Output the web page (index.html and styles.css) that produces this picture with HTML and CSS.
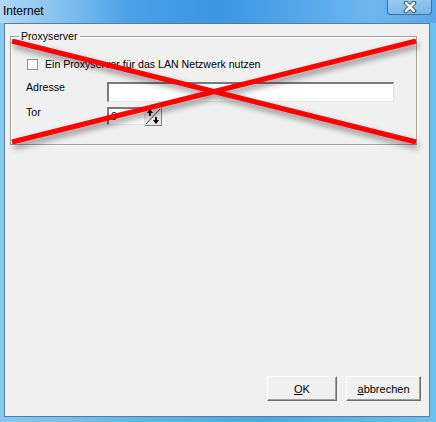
FILE: index.html
```html
<!DOCTYPE html>
<html lang="de">

<head>
    <meta charset="UTF-8">
    <title>Internet</title>
    <link rel="stylesheet" href="styles.css">
</head>

<body>
    <div class="window">
        <div class="titlebar">
            <span class="title">Internet</span>
            <div class="close-btn">
                <svg width="16" height="12" viewBox="0 0 16 12">
                    <path d="M4 2 L12 10 M12 2 L4 10" stroke="#3a4e66" stroke-width="4.5" stroke-linecap="round" />
                    <path d="M4 2 L12 10 M12 2 L4 10" stroke="#ffffff" stroke-width="2.5" stroke-linecap="round" />
                </svg>
            </div>
        </div>

        <div class="client">
            <fieldset class="group">
                <legend>Proxyserver</legend>

                <label class="check-row">
                    <span class="checkbox"></span>
                    Ein Proxyserver für das LAN Netzwerk nutzen
                </label>

                <div class="form-row">
                    <span class="label">Adresse</span>
                    <div class="field field-wide"></div>
                </div>

                <div class="form-row form-row-small">
                    <span class="label">Tor</span>
                    <div class="spinner">
                        <div class="field field-short">0</div>
                        <div class="spin-btn">
                            <svg width="16" height="17" viewBox="0 0 16 17">
                                <path d="M1 16 L15 1" stroke="#404040" stroke-width="1" />
                                <path d="M5 1 L2 5 L8 5 Z" fill="#000" />
                                <rect x="4" y="5" width="2" height="3" fill="#000" />
                                <path d="M11 16 L8 12 L14 12 Z" fill="#000" />
                                <rect x="10" y="9" width="2" height="3" fill="#000" />
                            </svg>
                        </div>
                    </div>
                </div>
            </fieldset>

            <div class="buttons">
                <button class="btn"><u>O</u>K</button>
                <button class="btn btn-cancel"><u>a</u>bbrechen</button>
            </div>

            <svg class="cross" width="420" height="110" viewBox="0 0 420 110">
                <line x1="2" y1="2" x2="406" y2="103" stroke="#ff0000" stroke-width="5" />
                <line x1="2" y1="103" x2="406" y2="2" stroke="#ff0000" stroke-width="5" />
            </svg>
        </div>
    </div>
</body>

</html>
```

FILE: styles.css
```css
body {
    margin: 0;
    font-family: "Liberation Sans", Arial, sans-serif;
    font-size: 10.6px;
    color: #000;
}

.window {
    width: 436px;
    height: 422px;
    box-sizing: border-box;
    display: flex;
    flex-direction: column;
    padding: 0 6px 5px 4px;
    background: linear-gradient(90deg, #86cbf0 0%, #5fb8ec 30%, #4aa8e6 60%, #6ac2f0 100%);
}

.titlebar {
    height: 23px;
    display: flex;
    align-items: flex-start;
    justify-content: space-between;
    margin: 0 -6px 0 -4px;
    padding: 0 4px 0 3px;
    background: linear-gradient(90deg, #b2d8f4 0%, #8cc4ef 12%, #4aa0e6 30%, #3a96e2 50%, #56a9ea 70%, #6fb6ee 85%, #5aa6e6 100%);
}

.title {
    font-size: 12px;
    margin-top: 4px;
    color: #000;
}

.close-btn {
    width: 43px;
    height: 15px;
    margin-top: -1px;
    border: 1px solid #4a6f96;
    border-top: none;
    border-radius: 0 0 4px 4px;
    background: linear-gradient(180deg, rgba(255, 255, 255, 0.35), rgba(255, 255, 255, 0.15));
    display: flex;
    align-items: center;
    justify-content: center;
}

.client {
    flex: 1;
    position: relative;
    background: #f0f0f0;
    border: 1px solid #5a7b9c;
    display: flex;
    flex-direction: column;
}

.group {
    margin: 6px 12px 0 5px;
    padding: 16px 0 18px 15px;
    border: 1px solid #a0a0a0;
    box-shadow: inset 1px 1px 0 #fff, 1px 1px 0 #fff;
}

.group legend {
    padding: 0 2px;
    margin-left: -7px;
    color: #000;
}

.check-row {
    display: flex;
    align-items: center;
    gap: 7px;
    margin: 0 0 12px 1px;
}

.checkbox {
    width: 9px;
    height: 9px;
    background: #fff;
    border: 1px solid #8e8f8f;
}

.form-row {
    display: grid;
    grid-template-columns: 81px 1fr;
    align-items: start;
    margin-bottom: 5px;
}

.form-row-small {
    margin-bottom: 0;
}

.form-row .label {
    margin-top: -1px;
}

.field {
    height: 20px;
    box-sizing: border-box;
    background: #fff;
    border-top: 2px solid #7a7a7a;
    border-left: 2px solid #7a7a7a;
    border-right: 1px solid #e3e3e3;
    border-bottom: 1px solid #e3e3e3;
}

.field-wide {
    width: 287px;
}

.spinner {
    display: flex;
    align-items: flex-start;
}

.field-short {
    width: 38px;
    height: 18px;
    padding-left: 2px;
    line-height: 14px;
}

.spin-btn {
    width: 16px;
    height: 17px;
    margin-top: 1px;
    background: #e8e8e8;
    border-right: 1px solid #808080;
    border-bottom: 1px solid #808080;
}

.spin-btn svg {
    display: block;
}

.buttons {
    margin-top: auto;
    display: flex;
    justify-content: flex-end;
    gap: 9px;
    padding: 0 8px 15px 0;
}

.btn {
    width: 70px;
    height: 25px;
    font-family: "Liberation Sans", Arial, sans-serif;
    font-size: 11px;
    background: #f0f0f0;
    border: 1px solid;
    border-color: #fff #6e6e6e #6e6e6e #fff;
    box-shadow: inset -1px -1px 0 #a0a0a0;
    padding: 0;
}

.btn-cancel {
    width: 75px;
}

.cross {
    position: absolute;
    left: 5px;
    top: 15px;
    filter: drop-shadow(2px 4px 3px rgba(0, 0, 0, 0.45));
}
```
